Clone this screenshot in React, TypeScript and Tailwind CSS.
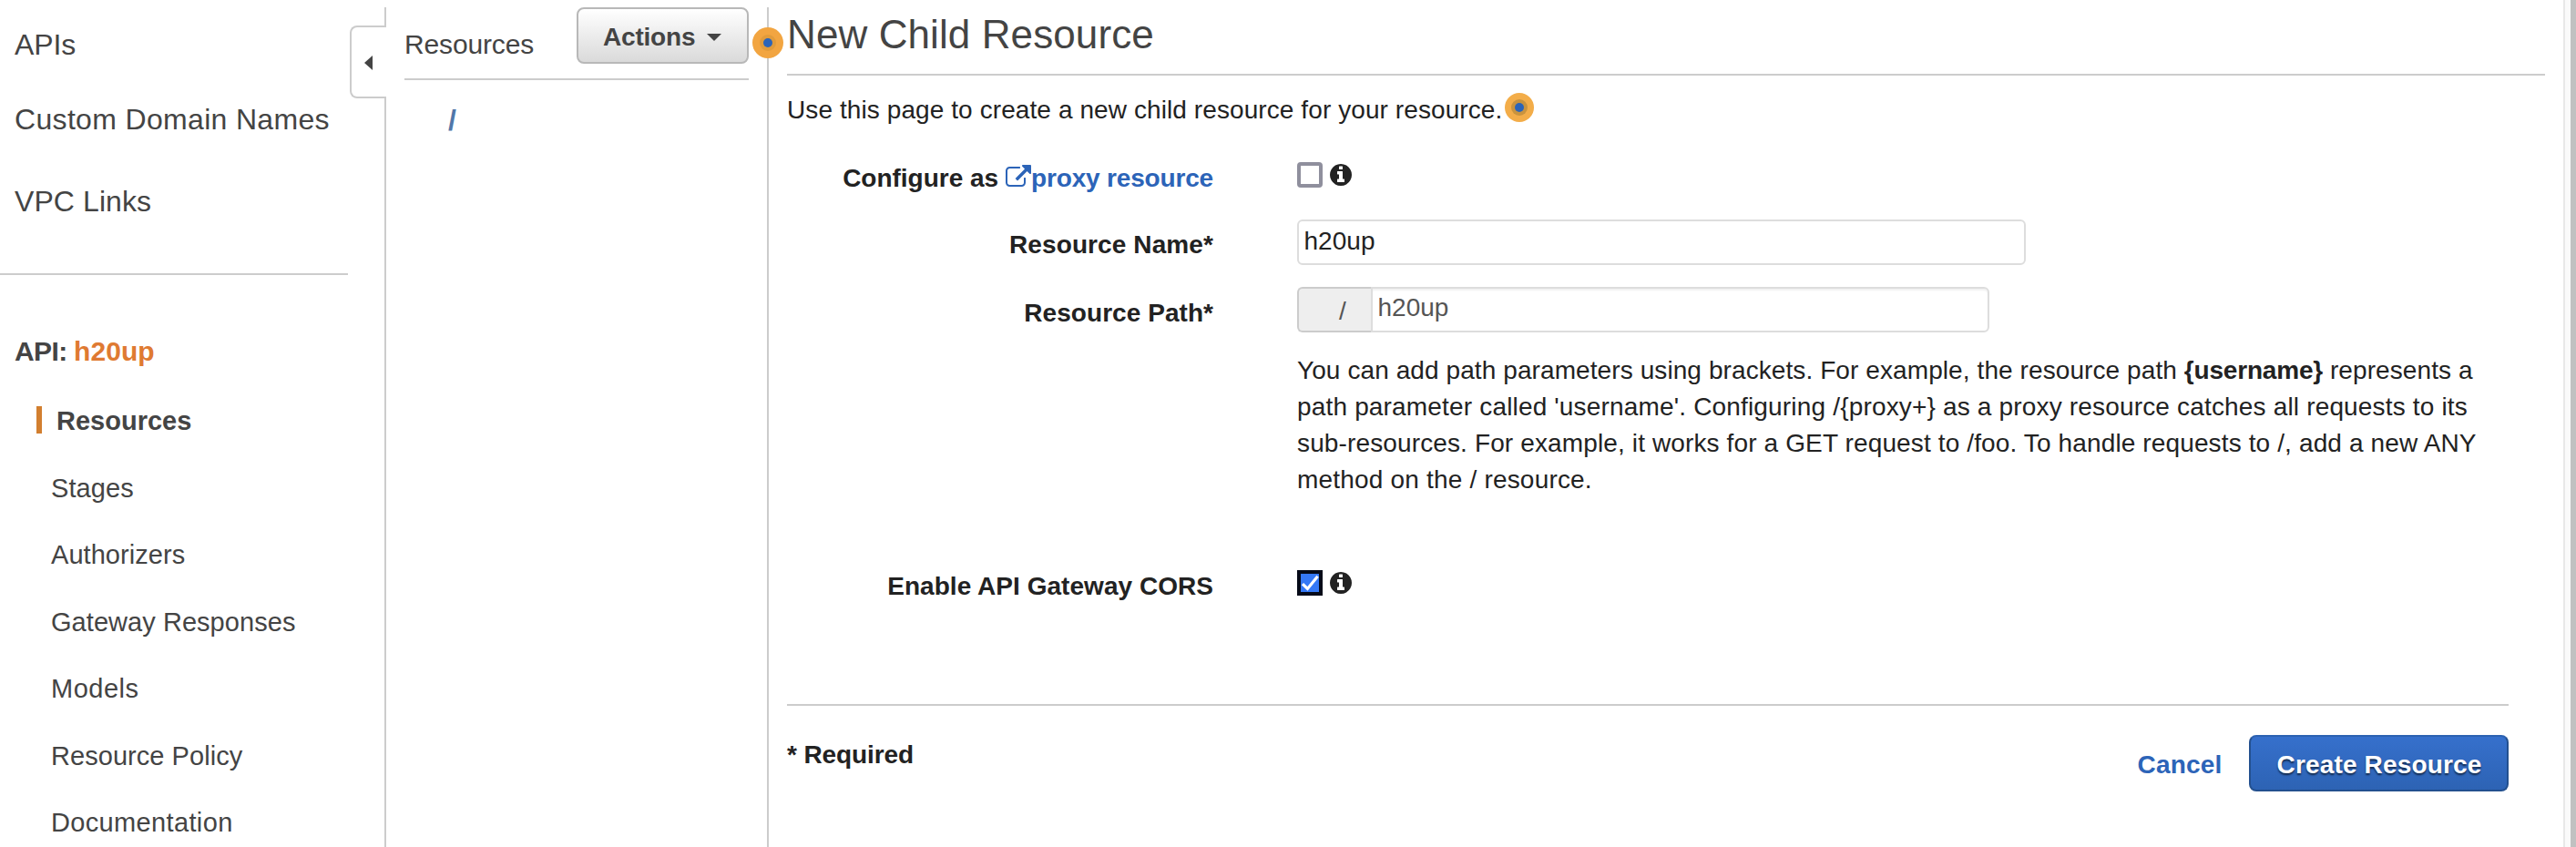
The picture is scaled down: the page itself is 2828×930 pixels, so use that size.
import React from "react";

function InfoIcon() {
  return (
    <svg viewBox="0 0 1792 1792" className="ml-[5.5px] size-7 fill-[#222]" aria-hidden="true">
      <path d="M1152 1376v-160q0-14-9-23t-23-9h-96v-512q0-14-9-23t-23-9h-320q-14 0-23 9t-9 23v160q0 14 9 23t23 9h96v320h-96q-14 0-23 9t-9 23v160q0 14 9 23t23 9h448q14 0 23-9t9-23zm-128-896v-160q0-14-9-23t-23-9h-192q-14 0-23 9t-9 23v160q0 14 9 23t23 9h192q14 0 23-9t9-23zm640 416q0 209-103 385.5t-279.5 279.5-385.5 103-385.5-103-279.5-279.5-103-385.5 103-385.5 279.5-279.5 385.5-103 385.5 103 279.5 279.5 103 385.5z" />
    </svg>
  );
}

function ExternalLinkIcon() {
  return (
    <svg viewBox="0 0 1792 1792" className="size-7 -translate-y-px fill-[#2c64b8]" aria-hidden="true">
      <path d="M1408 928v320q0 119-84.5 203.5t-203.5 84.5h-832q-119 0-203.5-84.5t-84.5-203.5v-832q0-119 84.5-203.5t203.5-84.5h704q14 0 23 9t9 23v64q0 14-9 23t-23 9h-704q-66 0-113 47t-47 113v832q0 66 47 113t113 47h832q66 0 113-47t47-113v-320q0-14 9-23t23-9h64q14 0 23 9t9 23zm384-864v512q0 26-19 45t-45 19-45-19l-176-176-652 652q-10 10-23 10t-23-10l-114-114q-10-10-10-23t10-23l652-652-176-176q-19-19-19-45t19-45 45-19h512q26 0 45 19t19 45z" />
    </svg>
  );
}

function Sidebar() {
  return (
    <nav className="relative mt-2 h-[922px] w-[424px] shrink-0 border-r-2 border-[#ccc] text-[#444]">
      <div className="h-[292px] pt-[21px] pl-4 text-[32px] leading-10">
        <div className="tracking-[-0.1px]">APIs</div>
        <div className="mt-[42px] tracking-[0.33px]">Custom Domain Names</div>
        <div className="mt-[50px] tracking-[0.08px]">VPC Links</div>
      </div>
      <div className="h-0.5 w-[382px] bg-[#ccc]" />
      <div className="mt-16 pl-4 text-[30px] leading-10 font-bold">
        <span className="tracking-[-0.6px]">API:</span>{" "}
        <span className="-ml-px tracking-[0.1px] text-[#df7a32]">h20up</span>
      </div>
      <ul className="mt-9 text-[29px] leading-10">
        <li className="flex h-[73.5px] items-start pl-10">
          <span className="mt-1 mr-4 h-[30px] w-1.5 bg-[#d27f2f]" />
          <span className="font-bold">Resources</span>
        </li>
        <li className="h-[73.5px] pl-14 tracking-[0.1px]">Stages</li>
        <li className="h-[73.5px] pl-14 tracking-[0.05px]">Authorizers</li>
        <li className="h-[73.5px] pl-14 tracking-[0.05px]">Gateway Responses</li>
        <li className="h-[73.5px] pl-14 tracking-[0.5px]">Models</li>
        <li className="h-[73.5px] pl-14 tracking-[0.05px]">Resource Policy</li>
        <li className="h-10 pl-14 tracking-[0.35px]">Documentation</li>
      </ul>
      <button className="absolute top-5 -right-0.5 flex h-20 w-10 items-center rounded-l-lg border-2 border-r-0 border-[#ccc] bg-white pt-0.5 pl-3.5" aria-label="Collapse">
        <svg viewBox="0 0 9 16" className="h-4 w-[9px] fill-[#444]" aria-hidden="true">
          <path d="M9 0v16L0 8z" />
        </svg>
      </button>
    </nav>
  );
}

function ResourceTree() {
  return (
    <section className="relative mt-2 h-[922px] w-[420px] shrink-0 border-r-2 border-[#ccc] pl-5 text-[#444]">
      <div className="mr-5 flex h-20 items-start justify-between border-b-2 border-[#ccc]">
        <h2 className="pt-[21px] text-[30px] leading-10 tracking-[-0.15px]">Resources</h2>
        <button className="flex h-[62px] w-[189px] items-center rounded-lg border-2 border-[#b8b8b8] bg-linear-to-b from-white to-[#dadada] pt-[3px] pl-[27px] text-[28px] font-bold tracking-[-0.2px]">
          Actions
          <svg viewBox="0 0 16 8" className="ml-[13px] h-2 w-4 fill-[#444]" aria-hidden="true">
            <path d="M0 0h16L8 8z" />
          </svg>
        </button>
      </div>
      <div className="pt-6 pl-12 text-[32px] leading-10 font-bold text-[#5177a9]">/</div>
      <svg viewBox="0 0 34 34" className="absolute top-[22px] -right-[18px] z-10 size-[34px]" aria-hidden="true">
        <circle cx="17" cy="17" r="17" fill="#f2a541" />
        <circle cx="17" cy="17" r="9" fill="#e19b3b" />
        <circle cx="17" cy="17" r="5" fill="#2c64b8" />
      </svg>
    </section>
  );
}

function CreateForm() {
  return (
    <main className="w-[1970px] shrink-0 pl-5 text-[28px] leading-10 text-[#222]">
      <h1 className="h-[81px] pt-3 text-[44px] leading-[52px] tracking-[0.1px] text-[#444]">New Child Resource</h1>
      <div className="h-0.5 w-[1930px] bg-[#ccc]" />
      <p className="flex h-[93px] items-start pt-[18px]">
        <span className="tracking-[0.09px]">Use this page to create a new child resource for your resource.</span>
        <svg viewBox="0 0 32 32" className="ml-[3px] size-8 translate-y-px" aria-hidden="true">
          <circle cx="16" cy="16" r="16" fill="#f3ad49" />
          <circle cx="16" cy="16" r="9" fill="#c9933e" />
          <circle cx="16" cy="16" r="5" fill="#2c64b8" />
        </svg>
      </p>

      <div className="flex h-[65px] items-start">
        <div className="flex w-[468px] items-start justify-end font-bold">
          <span className="mr-2 tracking-[-0.02px]">Configure as</span>
          <a className="flex items-center text-[#2c64b8]">
            <ExternalLinkIcon />
            <span className="tracking-[-0.17px]">proxy resource</span>
          </a>
        </div>
        <div className="ml-[92px] flex pt-0.5">
          <span role="checkbox" aria-checked="false" className="size-7 rounded-sm border-4 border-[#8f8f9d] bg-white" />
          <InfoIcon />
        </div>
      </div>

      <div className="flex h-[74px] items-start">
        <label className="w-[468px] pt-2 text-right font-bold tracking-[0.1px]">Resource Name*</label>
        <div className="ml-[92px] flex h-[50px] w-[800px] items-center rounded-md border-2 border-[#ddd] pb-0.5 pl-[5.5px] tracking-[0.05px]">
          h20up
        </div>
      </div>

      <div className="flex h-[71px] items-start">
        <label className="w-[468px] pt-[9px] text-right font-bold tracking-[0.05px]">Resource Path*</label>
        <div className="ml-[92px] flex h-[50px] w-[760px]">
          <span className="flex w-[81px] items-center rounded-l-md border-2 border-r-0 border-[#ccc] bg-[#eee] pt-1 pl-[44px] text-[#555]">/</span>
          <div className="flex flex-1 items-center rounded-r-md border-2 border-[#ddd] pb-1 pl-[5.5px] text-[#555] shadow-[inset_0_2px_2px_rgba(0,0,0,0.06)]">
            h20up
          </div>
        </div>
      </div>

      <p className="ml-[560px] h-[238px] pt-px whitespace-nowrap">
        <span className="tracking-[0.09px]">
          You can add path parameters using brackets. For example, the resource path <b className="tracking-[-0.19px]">{"{username}"}</b> represents a
        </span>
        <br />
        <span className="tracking-[0.17px]">
          path parameter called 'username'. Configuring /{"{proxy+}"} as a proxy resource catches all requests to its
        </span>
        <br />
        <span className="tracking-[0.13px]">
          sub-resources. For example, it works for a GET request to /foo. To handle requests to /, add a new ANY
        </span>
        <br />
        <span className="tracking-[0.19px]">method on the / resource.</span>
      </p>

      <div className="flex h-[149px] items-start">
        <label className="w-[468px] text-right font-bold tracking-[0.04px]">Enable API Gateway CORS</label>
        <div className="ml-[92px] flex pt-0.5">
          <span role="checkbox" aria-checked="true" className="size-7 border-4 border-[#050a18] bg-[#3478f6]">
            <svg viewBox="0 0 20 20" className="size-5" aria-hidden="true">
              <path d="M2 11.2L7.4 16.4L18.6 2.8" fill="none" stroke="white" strokeWidth="3.2" />
            </svg>
          </span>
          <InfoIcon />
        </div>
      </div>

      <div className="h-0.5 w-[1890px] bg-[#ccc]" />
      <div className="flex w-[1890px] items-start font-bold">
        <span className="mt-[34px] mr-auto tracking-[-0.1px]">* Required</span>
        <a className="mt-[45px] mr-[29.5px] tracking-[0.2px] text-[#2c64b8]">Cancel</a>
        <button className="mt-8 flex h-[62px] w-[285px] items-center justify-center rounded-lg border-2 border-[#23508f] border-t-[#2c62b2] bg-linear-to-b from-[#3670cc] to-[#2d63b4] pt-1 pl-px tracking-[0.15px] text-white text-shadow-[0_2px_2px_rgba(0,0,0,0.6)]">
          Create Resource
        </button>
      </div>
    </main>
  );
}

export default function App() {
  return (
    <div className="flex h-[930px] w-[2828px] overflow-hidden bg-white font-['Liberation_Sans',Arial,sans-serif]">
      <Sidebar />
      <ResourceTree />
      <CreateForm />
      <div className="flex h-full w-3.5 shrink-0 justify-end border-l-2 border-[#e8e8e8] bg-[#fafafa]">
        <div className="w-1.5 bg-[#c1c1c1]" />
      </div>
    </div>
  );
}
